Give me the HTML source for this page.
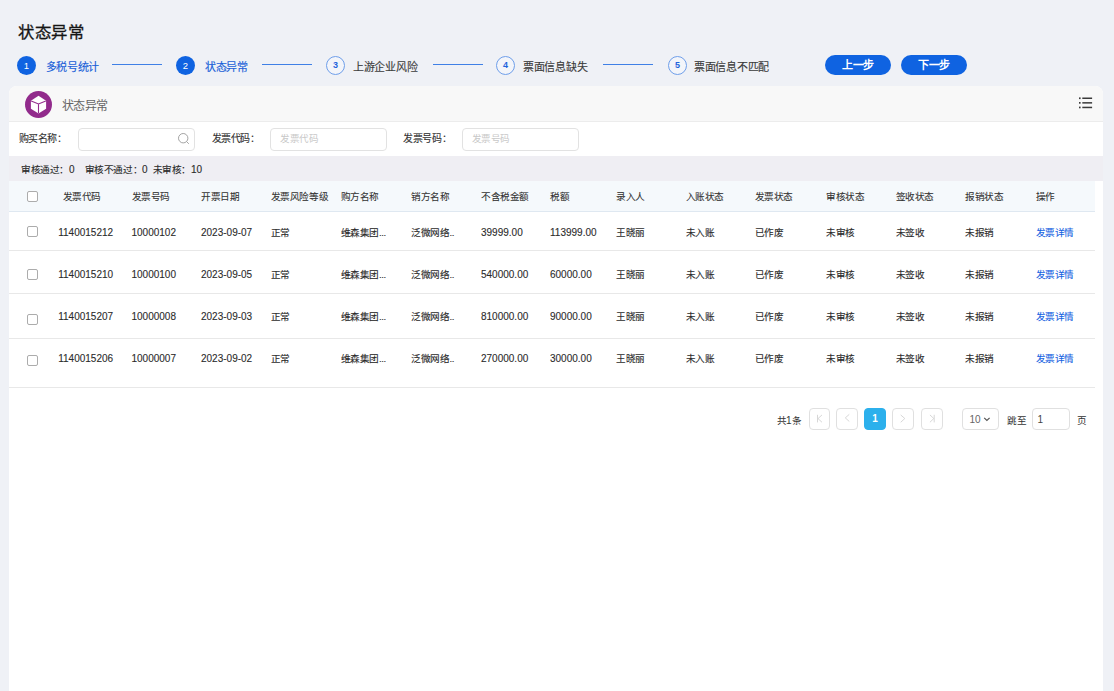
<!DOCTYPE html>
<html lang="zh-CN">
<head>
<meta charset="utf-8">
<style>
*{box-sizing:border-box;margin:0;padding:0}
html,body{width:1114px;height:691px;overflow:hidden}
body{background:#eff1f6;font-family:"Liberation Sans",sans-serif;color:#333;position:relative}
.a,.t{position:absolute;white-space:nowrap;line-height:1}
.title{left:18.3px;top:24.4px;font-size:16.4px;letter-spacing:0.5px;color:#151515;-webkit-text-stroke:0.3px #151515}
.sc{position:absolute;width:19px;height:19px;border-radius:50%;font-size:9px;line-height:19px;text-align:center;top:56px}
.sc.f{background:#0f63e1;color:#fff;font-size:9.5px}
.sc.o{border:1px solid #6f9fea;color:#1f64dc;line-height:17px;background:#f3f5fa;font-weight:bold}
.sl{position:absolute;top:62px;font-size:11px;letter-spacing:-0.3px;line-height:1;-webkit-text-stroke:0.15px currentColor}
.sl.f{color:#1a5fd8}
.sl.o{color:#3a3a3a;-webkit-text-stroke:0.12px #3a3a3a}
.ln{position:absolute;top:64px;height:1px;background:#3f80e6;width:50px}
.btn{position:absolute;top:55px;width:66px;height:20px;border-radius:10px;background:#0f63e1;color:#fff;font-size:11px;letter-spacing:-0.3px;font-weight:bold;text-align:center;line-height:20px}
.card{position:absolute;left:9px;top:86px;width:1094px;height:620px;background:#fff;border-radius:8px 8px 0 0;overflow:hidden}
.chead{position:absolute;left:9px;top:86px;width:1094px;height:36px;background:#f8f8f8;border-bottom:1.5px solid #ececec;border-radius:8px 8px 0 0}
.icon{position:absolute;left:24.5px;top:90.5px;width:27px;height:27px;border-radius:50%;background:#922b8c}
.htitle{left:61.5px;top:99.9px;font-size:12px;letter-spacing:-0.35px;color:#666}
.fl{position:absolute;top:133.8px;font-size:10px;letter-spacing:-0.36px;line-height:1;color:#333;-webkit-text-stroke:0.1px #333}
.inp{position:absolute;top:128px;height:23px;border:1px solid #e2e2e2;border-radius:4px;background:#fff}
.ph{position:absolute;top:133.6px;font-size:9.5px;letter-spacing:-0.45px;line-height:1;color:#c8c8c8}
.stats{position:absolute;left:9px;top:156px;width:1094px;height:25px;background:#efeef3}
.st{position:absolute;top:165px;font-size:9.6px;letter-spacing:-0.4px;line-height:1;color:#2b2b2b;-webkit-text-stroke:0.12px #2b2b2b}
.thead{position:absolute;left:9px;top:181px;width:1085.5px;height:31px;background:#f5f9fc;border-bottom:1.5px solid #dfe8f1}
.th{font-size:9.6px;letter-spacing:-0.4px;color:#333;-webkit-text-stroke:0.08px #333}
.td{font-size:9.6px;letter-spacing:-0.4px;color:#2b2b2b;-webkit-text-stroke:0.12px #2b2b2b}
.td.n{font-size:10px;letter-spacing:0;-webkit-text-stroke:0.1px #2b2b2b}
.link{color:#1562e2;-webkit-text-stroke:0.1px #1562e2}
.d{font-size:10px;letter-spacing:0}
.cb{position:absolute;width:11.3px;height:11.3px;border:1px solid #acacac;border-radius:2px;background:#fff}
.rl{position:absolute;left:9px;width:1085.5px;height:1.3px;background:#e8e8e8}
.pg{position:absolute;top:408px;width:21.5px;height:22px;border:1px solid #e0e0e0;border-radius:4px;background:#fff}
.pg.act{background:#2cb0ec;border-color:#2cb0ec;color:#fff;font-size:10px;font-weight:bold;text-align:center;line-height:20px}
</style>
</head>
<body>
<div class="a title">状态异常</div>

<div class="sc f" style="left:17px">1</div>
<div class="sl f" style="left:45.5px">多税号统计</div>
<div class="ln" style="left:112px"></div>
<div class="sc f" style="left:176px">2</div>
<div class="sl f" style="left:205px">状态异常</div>
<div class="ln" style="left:262px"></div>
<div class="sc o" style="left:326px">3</div>
<div class="sl o" style="left:353px">上游企业风险</div>
<div class="ln" style="left:433px"></div>
<div class="sc o" style="left:496px">4</div>
<div class="sl o" style="left:523px">票面信息缺失</div>
<div class="ln" style="left:603px"></div>
<div class="sc o" style="left:668px">5</div>
<div class="sl o" style="left:694px">票面信息不匹配</div>

<div class="btn" style="left:825px">上一步</div>
<div class="btn" style="left:901px">下一步</div>

<div class="card"></div>
<div class="chead"></div>
<div class="icon">
  <svg width="27" height="27" viewBox="0 0 27 27" style="position:absolute;left:0;top:0">
    <path d="M13.5 4.7 L21.1 9.8 L21.1 17.7 L13.5 22.4 L5.9 17.7 L5.9 9.8 Z" fill="#fff"/>
    <path d="M6.2 10 L13.5 12.9 L20.8 10 M13.5 12.9 L13.5 22.2" stroke="#922b8c" stroke-width="1.1" fill="none"/>
  </svg>
</div>
<div class="a htitle">状态异常</div>
<svg class="a" style="left:1070px;top:90px" width="30" height="25" viewBox="1070 90 30 25">
  <g fill="#3a3a3a">
  <rect x="1079" y="97.4" width="1.6" height="1.7"/><rect x="1082.3" y="97.5" width="9.8" height="1.5"/>
  <rect x="1079" y="102" width="1.6" height="1.7"/><rect x="1082.3" y="102.1" width="9.8" height="1.5"/>
  <rect x="1079" y="106.6" width="1.6" height="1.7"/><rect x="1082.3" y="106.7" width="9.8" height="1.5"/>
  </g>
</svg>

<div class="fl" style="left:18.5px">购买名称：</div>
<div class="inp" style="left:78px;width:117px"></div>
<svg class="a" style="left:176px;top:131px" width="16" height="16" viewBox="0 0 16 16">
  <circle cx="7.2" cy="7.2" r="4.7" stroke="#9a9a9a" stroke-width="0.9" fill="none"/>
  <path d="M10.6 10.6 L12.8 12.8" stroke="#9a9a9a" stroke-width="0.9"/>
</svg>
<div class="fl" style="left:211.5px">发票代码：</div>
<div class="inp" style="left:270px;width:117px"></div>
<div class="ph" style="left:280px">发票代码</div>
<div class="fl" style="left:403px">发票号码：</div>
<div class="inp" style="left:462px;width:116.5px"></div>
<div class="ph" style="left:471.5px">发票号码</div>

<div class="stats"></div>
<div class="st" style="left:21px">审核通过：<span class="d">0</span></div>
<div class="st" style="left:84.5px">审核不通过：<span class="d">0</span></div>
<div class="st" style="left:152.5px">未审核：<span class="d">10</span></div>

<div class="thead"></div>
<div class="t th" style="left:62.5px;top:191.6px">发票代码</div>
<div class="t th" style="left:131.5px;top:191.6px">发票号码</div>
<div class="t th" style="left:201px;top:191.6px">开票日期</div>
<div class="t th" style="left:270.5px;top:191.6px">发票风险等级</div>
<div class="t th" style="left:340.5px;top:191.6px">购方名称</div>
<div class="t th" style="left:411px;top:191.6px">销方名称</div>
<div class="t th" style="left:481px;top:191.6px">不含税金额</div>
<div class="t th" style="left:550px;top:191.6px">税额</div>
<div class="t th" style="left:616px;top:191.6px">录入人</div>
<div class="t th" style="left:685.5px;top:191.6px">入账状态</div>
<div class="t th" style="left:754.5px;top:191.6px">发票状态</div>
<div class="t th" style="left:826px;top:191.6px">审核状态</div>
<div class="t th" style="left:895.5px;top:191.6px">签收状态</div>
<div class="t th" style="left:965px;top:191.6px">报销状态</div>
<div class="t th" style="left:1035.5px;top:191.6px">操作</div>
<div class="cb" style="left:26.8px;top:190.5px"></div>
<div class="cb" style="left:26.8px;top:226px"></div>
<div class="t td n" style="left:58.2px;top:227.5px">1140015212</div>
<div class="t td n" style="left:131.5px;top:227.5px">10000102</div>
<div class="t td n" style="left:201px;top:227.5px">2023-09-07</div>
<div class="t td" style="left:270.5px;top:227.5px">正常</div>
<div class="t td" style="left:340.5px;top:227.5px">维森集团...</div>
<div class="t td" style="left:411px;top:227.5px">泛微网络..</div>
<div class="t td n" style="left:481px;top:227.5px">39999.00</div>
<div class="t td n" style="left:550px;top:227.5px">113999.00</div>
<div class="t td" style="left:616px;top:227.5px">王晓丽</div>
<div class="t td" style="left:685.5px;top:227.5px">未入账</div>
<div class="t td" style="left:754.5px;top:227.5px">已作废</div>
<div class="t td" style="left:826px;top:227.5px">未审核</div>
<div class="t td" style="left:895.5px;top:227.5px">未签收</div>
<div class="t td" style="left:965px;top:227.5px">未报销</div>
<div class="t td link" style="left:1035.5px;top:227.5px">发票详情</div>
<div class="cb" style="left:26.8px;top:269px"></div>
<div class="t td n" style="left:58.2px;top:269.7px">1140015210</div>
<div class="t td n" style="left:131.5px;top:269.7px">10000100</div>
<div class="t td n" style="left:201px;top:269.7px">2023-09-05</div>
<div class="t td" style="left:270.5px;top:269.7px">正常</div>
<div class="t td" style="left:340.5px;top:269.7px">维森集团...</div>
<div class="t td" style="left:411px;top:269.7px">泛微网络..</div>
<div class="t td n" style="left:481px;top:269.7px">540000.00</div>
<div class="t td n" style="left:550px;top:269.7px">60000.00</div>
<div class="t td" style="left:616px;top:269.7px">王晓丽</div>
<div class="t td" style="left:685.5px;top:269.7px">未入账</div>
<div class="t td" style="left:754.5px;top:269.7px">已作废</div>
<div class="t td" style="left:826px;top:269.7px">未审核</div>
<div class="t td" style="left:895.5px;top:269.7px">未签收</div>
<div class="t td" style="left:965px;top:269.7px">未报销</div>
<div class="t td link" style="left:1035.5px;top:269.7px">发票详情</div>
<div class="cb" style="left:26.8px;top:313.5px"></div>
<div class="t td n" style="left:58.2px;top:311.8px">1140015207</div>
<div class="t td n" style="left:131.5px;top:311.8px">10000008</div>
<div class="t td n" style="left:201px;top:311.8px">2023-09-03</div>
<div class="t td" style="left:270.5px;top:311.8px">正常</div>
<div class="t td" style="left:340.5px;top:311.8px">维森集团...</div>
<div class="t td" style="left:411px;top:311.8px">泛微网络..</div>
<div class="t td n" style="left:481px;top:311.8px">810000.00</div>
<div class="t td n" style="left:550px;top:311.8px">90000.00</div>
<div class="t td" style="left:616px;top:311.8px">王晓丽</div>
<div class="t td" style="left:685.5px;top:311.8px">未入账</div>
<div class="t td" style="left:754.5px;top:311.8px">已作废</div>
<div class="t td" style="left:826px;top:311.8px">未审核</div>
<div class="t td" style="left:895.5px;top:311.8px">未签收</div>
<div class="t td" style="left:965px;top:311.8px">未报销</div>
<div class="t td link" style="left:1035.5px;top:311.8px">发票详情</div>
<div class="cb" style="left:26.8px;top:355px"></div>
<div class="t td n" style="left:58.2px;top:353.9px">1140015206</div>
<div class="t td n" style="left:131.5px;top:353.9px">10000007</div>
<div class="t td n" style="left:201px;top:353.9px">2023-09-02</div>
<div class="t td" style="left:270.5px;top:353.9px">正常</div>
<div class="t td" style="left:340.5px;top:353.9px">维森集团...</div>
<div class="t td" style="left:411px;top:353.9px">泛微网络..</div>
<div class="t td n" style="left:481px;top:353.9px">270000.00</div>
<div class="t td n" style="left:550px;top:353.9px">30000.00</div>
<div class="t td" style="left:616px;top:353.9px">王晓丽</div>
<div class="t td" style="left:685.5px;top:353.9px">未入账</div>
<div class="t td" style="left:754.5px;top:353.9px">已作废</div>
<div class="t td" style="left:826px;top:353.9px">未审核</div>
<div class="t td" style="left:895.5px;top:353.9px">未签收</div>
<div class="t td" style="left:965px;top:353.9px">未报销</div>
<div class="t td link" style="left:1035.5px;top:353.9px">发票详情</div>
<div class="rl" style="top:250px"></div>
<div class="rl" style="top:293px"></div>
<div class="rl" style="top:337.5px"></div>
<div class="rl" style="top:386.5px"></div>

<div class="a" style="left:776.5px;top:416px;font-size:9.6px;letter-spacing:-0.4px;color:#333">共<span class="d">1</span>条</div>
<div class="pg" style="left:808.5px"></div>
<div class="pg" style="left:836.3px"></div>
<div class="pg act" style="left:864.2px">1</div>
<div class="pg" style="left:892px"></div>
<div class="pg" style="left:921.2px"></div>
<svg class="a" style="left:800px;top:400px" width="150" height="30" viewBox="800 400 150 30">
  <g stroke="#d2d2d2" stroke-width="0.9" fill="none" stroke-linecap="round">
    <path d="M817.5 415.2 V422"/><path d="M821.7 415.2 L818 418.6 L821.7 422"/>
    <path d="M849 414.6 L845.3 417.9 L849 421.2"/>
    <path d="M901 415.2 L904.8 418.5 L901 422"/>
    <path d="M930.2 415.2 L933.8 418.5 L930.2 422"/><path d="M934.2 415.2 V422"/>
  </g>
</svg>
<div class="pg" style="left:962px;width:37px"></div>
<div class="a" style="left:969.5px;top:415px;font-size:10px;color:#666">10</div>
<svg class="a" style="left:980px;top:414px" width="14" height="10" viewBox="980 414 14 10"><path d="M984.2 417.9 L986.9 420.5 L989.6 417.9" stroke="#555" stroke-width="1.2" fill="none"/></svg>
<div class="a" style="left:1007px;top:416px;font-size:9.6px;letter-spacing:-0.4px;color:#333">跳至</div>
<div class="pg" style="left:1031.5px;width:38.5px"></div>
<div class="a" style="left:1037.5px;top:415px;font-size:10px;color:#444">1</div>
<div class="a" style="left:1076.5px;top:416px;font-size:9.6px;color:#333">页</div>
</body>
</html>
